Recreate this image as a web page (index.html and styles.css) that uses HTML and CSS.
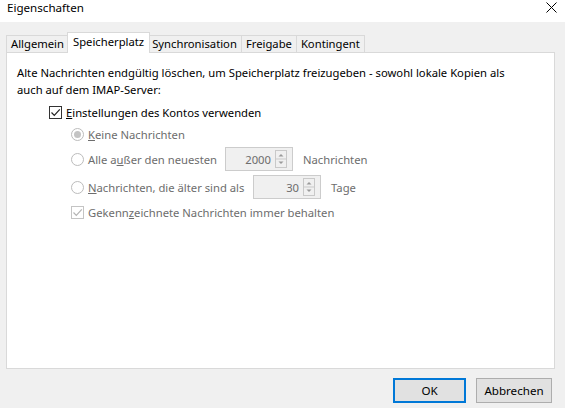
FILE: index.html
```html
<!DOCTYPE html>
<html lang="de">
<head>
    <meta charset="UTF-8">
    <title>Eigenschaften</title>
    <link rel="stylesheet" href="styles.css">
</head>
<body>

<div class="dialog">
    <div class="titlebar">
        <span class="title">Eigenschaften</span>
        <svg class="close" width="11" height="11" viewBox="0 0 11 11">
            <path d="M0.5 0.5 L10.5 10.5 M10.5 0.5 L0.5 10.5" stroke="#000" stroke-width="1" fill="none"/>
        </svg>
    </div>

    <div class="body">
        <div class="tabs">
            <div class="tab">Allgemein</div>
            <div class="tab active">Speicherplatz</div>
            <div class="tab">Synchronisation</div>
            <div class="tab">Freigabe</div>
            <div class="tab">Kontingent</div>
        </div>

        <div class="panel">
            <p class="intro">Alte Nachrichten endgültig löschen, um Speicherplatz freizugeben - sowohl lokale Kopien als<br>auch auf dem IMAP-Server:</p>

            <div class="row account">
                <span class="check">
                    <svg width="11" height="11" viewBox="0 0 11 11"><path d="M1.5 5.5 L4.3 8.3 L9.8 2.3" stroke="#222" stroke-width="1.2" fill="none"/></svg>
                </span>
                <span><u>E</u>instellungen des Kontos verwenden</span>
            </div>

            <div class="row sub disabled">
                <span class="radio checked"></span>
                <span><u>K</u>eine Nachrichten</span>
            </div>

            <div class="row sub spin-row disabled">
                <span class="radio"></span>
                <span class="label count-label">Alle a<u>u</u>ßer den neuesten</span>
                <span class="spinbox">
                    <span class="value">2000</span>
                    <svg class="arrows" width="12" height="18" viewBox="0 0 12 18">
                        <rect x="0.5" y="0.5" width="11" height="17" fill="#f0f0f0" stroke="#c9c9c9"/>
                        <line x1="1" y1="9" x2="11" y2="9" stroke="#c9c9c9"/>
                        <path d="M3.5 6.5 L6 4 L8.5 6.5 Z" fill="#9a9a9a"/>
                        <path d="M3.5 11.5 L6 14 L8.5 11.5 Z" fill="#9a9a9a"/>
                    </svg>
                </span>
                <span class="unit">Nachrichten</span>
            </div>

            <div class="row sub spin-row disabled">
                <span class="radio"></span>
                <span class="label age-label"><u>N</u>achrichten, die älter sind als</span>
                <span class="spinbox">
                    <span class="value">30</span>
                    <svg class="arrows" width="12" height="18" viewBox="0 0 12 18">
                        <rect x="0.5" y="0.5" width="11" height="17" fill="#f0f0f0" stroke="#c9c9c9"/>
                        <line x1="1" y1="9" x2="11" y2="9" stroke="#c9c9c9"/>
                        <path d="M3.5 6.5 L6 4 L8.5 6.5 Z" fill="#9a9a9a"/>
                        <path d="M3.5 11.5 L6 14 L8.5 11.5 Z" fill="#9a9a9a"/>
                    </svg>
                </span>
                <span class="unit">Tage</span>
            </div>

            <div class="row sub disabled">
                <span class="check">
                    <svg width="11" height="11" viewBox="0 0 11 11"><path d="M1.5 5.5 L4.3 8.3 L9.8 2.3" stroke="#b4b4b4" stroke-width="1.2" fill="none"/></svg>
                </span>
                <span>Gekenn<u>z</u>eichnete Nachrichten immer behalten</span>
            </div>
        </div>

        <div class="buttons">
            <button class="btn default ok">OK</button>
            <button class="btn cancel">Abbrechen</button>
        </div>
    </div>
</div>

</body>
</html>
```

FILE: styles.css
```css
html, body {
    margin: 0;
    padding: 0;
}

body {
    font-family: "Noto Sans", "Open Sans", sans-serif;
    font-size: 11.25px;
    color: #000;
    background-color: #f0f0f0;
}

.dialog {
    width: 565px;
    height: 408px;
    display: flex;
    flex-direction: column;
}

/* window caption */
.titlebar {
    height: 22px;
    background-color: #fff;
    display: flex;
    align-items: flex-start;
    justify-content: space-between;
    padding: 0 8px 0 7px;
}

.titlebar .title {
    line-height: 16px;
    font-size: 11.6px;
}

.titlebar .close {
    margin-top: 2px;
}

.body {
    flex: 1;
    background-color: #f0f0f0;
    display: flex;
    flex-direction: column;
}

/* tab strip */
.tabs {
    display: flex;
    align-items: flex-end;
    margin-top: 10px;
    padding-left: 6px;
    height: 20px;
}

.tab {
    height: 17px;
    line-height: 16px;
    padding: 0 4px;
    border: 1px solid #d9d9d9;
    border-bottom: none;
    box-sizing: border-box;
    background-color: #f0f0f0;
    margin-left: -1px;
}

.tab:first-child {
    margin-left: 0;
}

.tab.active {
    height: 21px;
    line-height: 18px;
    padding: 0 5px;
    margin: 0 -2px -1px -2px;
    background-color: #fff;
    position: relative;
    z-index: 1;
}

/* page of the selected tab */
.panel {
    height: 317px;
    box-sizing: border-box;
    margin: 0 10px 0 6px;
    border: 1px solid #d9d9d9;
    background-color: #fff;
    padding: 11px 10px;
}

.intro {
    margin: 0;
    line-height: 17px;
}

.row {
    display: flex;
    align-items: center;
    height: 18px;
    margin-top: 4px;
    white-space: nowrap;
}

.row.account {
    margin-top: 5px;
    margin-left: 32px;
}

.row.sub {
    margin-left: 54px;
}

.row.spin-row {
    height: 24px;
}

.row.disabled {
    color: #6d6d6d;
}

.check {
    width: 13px;
    height: 13px;
    box-sizing: border-box;
    border: 1px solid #333;
    background-color: #fff;
    margin-right: 4px;
    display: flex;
    align-items: center;
    justify-content: center;
}

.disabled .check {
    border-color: #c4c4c4;
}

.radio {
    width: 13px;
    height: 13px;
    box-sizing: border-box;
    border: 1px solid #bcbcbc;
    border-radius: 50%;
    background-color: #fff;
    margin-right: 4px;
    display: flex;
    align-items: center;
    justify-content: center;
}

.radio.checked::after {
    content: "";
    width: 7px;
    height: 7px;
    border-radius: 50%;
    background-color: #c4c4c4;
}

.count-label {
    width: 137px;
}

.age-label {
    width: 165px;
}

.spinbox {
    width: 68px;
    height: 24px;
    box-sizing: border-box;
    border: 1px solid #cccccc;
    background-color: #f0f0f0;
    display: flex;
    align-items: center;
    justify-content: flex-end;
    padding-right: 5px;
}

.spinbox .value {
    margin-right: 4px;
}

.unit {
    margin-left: 10px;
}

/* dialog buttons */
.buttons {
    display: flex;
    justify-content: flex-end;
    gap: 10px;
    margin-top: 9px;
    padding-right: 13px;
}

.btn {
    height: 25px;
    box-sizing: border-box;
    font-family: inherit;
    font-size: 11.6px;
    color: #000;
    background-color: #e1e1e1;
    border: 1px solid #adadad;
    padding: 0;
}

.btn.ok {
    width: 73px;
}

.btn.cancel {
    width: 76px;
}

.btn.default {
    border: 2px solid #0078d7;
}
```
